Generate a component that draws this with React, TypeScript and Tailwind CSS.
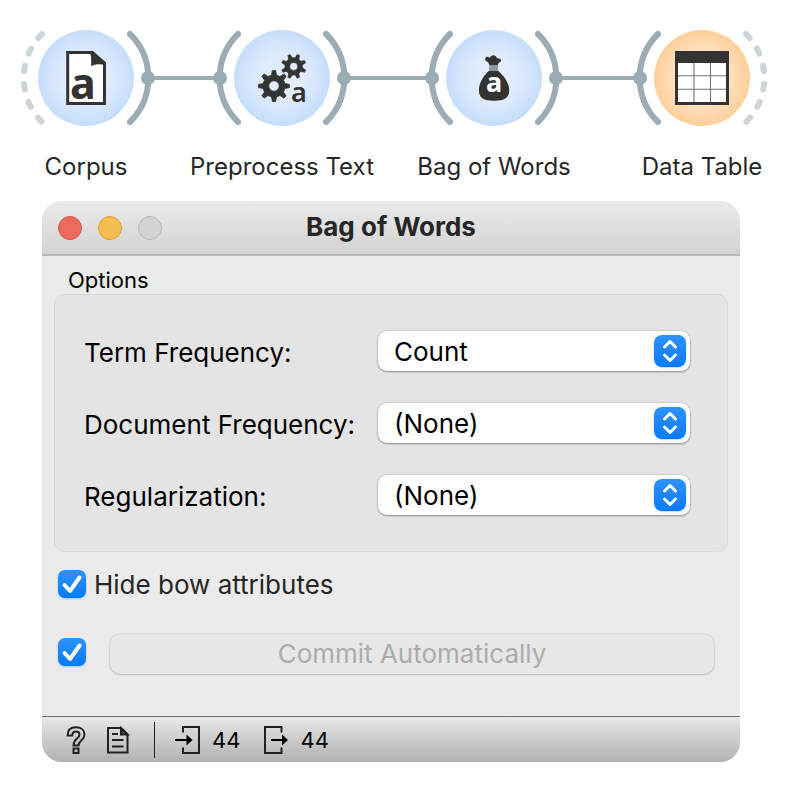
import React from "react";

const ARC = "#9cacb4";
const ARC_IDLE = "#cdd5d9";
const INK = "#333333";

type WidgetNode = {
  label: string;
  cx: number;
  fill: string;
  input: boolean;
  output: boolean;
};

const CY = 78;

const nodes: WidgetNode[] = [
  { label: "Corpus", cx: 86, fill: "url(#blue)", input: false, output: true },
  { label: "Preprocess Text", cx: 282, fill: "url(#blue)", input: true, output: true },
  { label: "Bag of Words", cx: 494, fill: "url(#blue)", input: true, output: true },
  { label: "Data Table", cx: 702, fill: "url(#orange)", input: true, output: false },
];

function Anchor({ cx, side, active }: { cx: number; side: -1 | 1; active: boolean }) {
  const x = cx + side * 44;
  const d = `M${x} ${CY - 44}A62 62 0 0 ${side === 1 ? 1 : 0} ${x} ${CY + 44}`;
  return (
    <g>
      <path
        d={d}
        fill="none"
        stroke={active ? ARC : ARC_IDLE}
        strokeWidth="6"
        strokeLinecap="round"
        strokeDasharray={active ? undefined : "5.5 12.8"}
      />
      {active && <circle cx={cx + side * 62} cy={CY} r="7" fill={ARC} />}
    </g>
  );
}

function gearPath(cx: number, cy: number, outer: number, root: number, hole: number, turn: number) {
  const teeth = 8;
  const step = (Math.PI * 2) / teeth;
  const at = (r: number, a: number) =>
    `${(cx + r * Math.sin(a)).toFixed(2)} ${(cy - r * Math.cos(a)).toFixed(2)}`;
  const points: string[] = [];
  for (let i = 0; i < teeth; i++) {
    const a = turn + i * step;
    points.push(at(root, a - step * 0.29), at(outer, a - step * 0.13), at(outer, a + step * 0.13), at(root, a + step * 0.29));
  }
  return (
    `M${points.join("L")}Z` +
    `M${cx - hole} ${cy}a${hole} ${hole} 0 1 0 ${hole * 2} 0a${hole} ${hole} 0 1 0 ${-hole * 2} 0Z`
  );
}

function Workflow() {
  return (
    <section aria-label="Workflow" className="relative mx-auto h-[201px] w-[788px]">
      <svg width="788" height="140" viewBox="0 0 788 140" className="block" aria-hidden="true">
        <defs>
          <radialGradient id="blue">
            <stop offset="0" stopColor="#e6effc" />
            <stop offset="0.5" stopColor="#dfebfc" />
            <stop offset="1" stopColor="#c6defc" />
          </radialGradient>
          <radialGradient id="orange">
            <stop offset="0" stopColor="#fff0de" />
            <stop offset="0.5" stopColor="#ffe3c4" />
            <stop offset="1" stopColor="#ffcf9b" />
          </radialGradient>
        </defs>
        <path d="M148 78H220M344 78H432M556 78H640" stroke={ARC} strokeWidth="4" />
        {nodes.map((n) => (
          <g key={n.label}>
            <circle cx={n.cx} cy={CY} r="48" fill={n.fill} />
            <Anchor cx={n.cx} side={-1} active={n.input} />
            <Anchor cx={n.cx} side={1} active={n.output} />
          </g>
        ))}

        {/* Corpus: page with folded corner */}
        <path d="M67.7 52.5H92L104.5 63.8V103.5H67.7Z" fill="#fff" stroke={INK} strokeWidth="3" />
        <path d="M89 51H93L106 62.5V65.5C101 63.7 96 63.8 91 66C91.5 60 91.5 55 89 51Z" fill={INK} />
        <text x="70" y="99" fontSize="43" className="font-['Noto_Sans',sans-serif] font-bold" fill={INK}>
          a
        </text>

        {/* Preprocess Text: two gears */}
        <path d={gearPath(274, 86, 15.6, 11.2, 5.2, 0)} fill={INK} fillRule="evenodd" stroke={INK} strokeWidth="0.8" strokeLinejoin="round" />
        <path d={gearPath(293.7, 66.4, 12.4, 8.8, 4, Math.PI / 8)} fill={INK} fillRule="evenodd" stroke={INK} strokeWidth="0.6" strokeLinejoin="round" />
        <text x="291" y="102" fontSize="27" className="font-['Noto_Sans',sans-serif] font-semibold" fill={INK}>
          a
        </text>

        {/* Bag of Words: tied sack */}
        <path
          d="M489.3 65.5C489 62.5 487.5 61.5 485.8 61C484.5 59.5 485.2 57 487 56.8C488.5 56.6 489.3 57.3 490 58C490.3 56 492 55.2 493.4 55.2C495 55.2 496.3 56 496.8 58C497.5 57.8 499 58.8 500.2 58.8C501.5 59.5 501.2 61.6 499.8 62.2C498.5 62.8 497.8 64 497.7 65.5Z"
          fill={INK}
        />
        <path d="M489 67H498M489 69H498" stroke={INK} strokeWidth="0.9" />
        <path
          d="M489.3 70.5H497.7C502 74 509.2 82 509.2 90C509.2 98 504.5 100.700 494 100.700C483.5 100.700 478.9 98 478.9 90C478.9 82 485 74 489.3 70.5Z"
          fill={INK}
        />
        <text x="486" y="92" fontSize="27" className="font-['Noto_Sans',sans-serif] font-bold" fill="#fff">
          a
        </text>

        {/* Data Table: grid */}
        <rect x="675" y="51" width="54" height="54" fill={INK} />
        <rect x="678" y="63" width="48" height="39" fill="#fff" />
        <path d="M694 63V102M710.5 63V102M678 75.7H726M678 89.2H726" stroke="#77736f" strokeWidth="1.1" />
      </svg>
      {nodes.map((n) => (
        <span
          key={n.label}
          className="absolute top-[151px] -translate-x-1/2 whitespace-nowrap text-[24px] leading-8 text-[#262626]"
          style={{ left: n.cx }}
        >
          {n.label}
        </span>
      ))}
    </section>
  );
}

function SelectRow({ id, label, options }: { id: string; label: string; options: string[] }) {
  return (
    <>
      <label htmlFor={id} className="whitespace-nowrap pt-1 text-[26px] leading-9">
        {label}
      </label>
      <div className="relative">
        <select
          id={id}
          defaultValue={options[0]}
          className="h-10 w-full appearance-none rounded-[9px] bg-white pl-4 pr-12 pt-0.5 text-[26px] leading-9 text-black shadow-[0_0_1px_1px_rgba(0,0,0,0.08),0_1px_2px_rgba(0,0,0,0.35)] outline-none"
        >
          {options.map((o) => (
            <option key={o}>{o}</option>
          ))}
        </select>
        <span className="pointer-events-none absolute right-1 top-1 h-8 w-8 rounded-lg bg-linear-to-b from-[#2e93ff] to-[#007aff] shadow-[0_1px_2px_rgba(0,122,255,0.3)]">
          <svg viewBox="0 0 32 32" className="size-8" fill="none" stroke="#fff" strokeWidth="3" strokeLinecap="round" strokeLinejoin="round" aria-hidden="true">
            <path d="M10.5 12L16 6.5L21.5 12M10.5 20L16 25.5L21.5 20" />
          </svg>
        </span>
      </div>
    </>
  );
}

function Check({ id, label }: { id: string; label?: string }) {
  return (
    <span className="relative block size-7 shrink-0">
      <input
        id={id}
        type="checkbox"
        defaultChecked
        aria-label={label}
        className="peer block size-7 appearance-none rounded-[7px] bg-white shadow-[0_1px_2px_rgba(0,122,255,0.35)] checked:bg-linear-to-b checked:from-[#2e93ff] checked:to-[#007aff]"
      />
      <svg viewBox="0 0 28 28" className="pointer-events-none absolute inset-0 hidden size-7 peer-checked:block" fill="none" stroke="#fff" strokeWidth="4" strokeLinecap="round" strokeLinejoin="round" aria-hidden="true">
        <path d="M6.5 15L12 21L21.5 7.5" />
      </svg>
    </span>
  );
}

function StatusBar() {
  return (
    <footer className="flex h-[46px] items-center border-t border-[#6e6e6e] bg-linear-to-b from-[#e8e8e8] to-[#b1b1b1] pl-6 text-[22px] leading-7 text-black">
      <button type="button" aria-label="Help" className="h-7 w-5">
        <svg viewBox="0 0 20 28" className="h-7 w-5" fill="none" stroke="#231f20" strokeWidth="2" aria-hidden="true">
          <path d="M1.5 9.5C1.5 4 5 1.2 10 1.2C15 1.2 18.5 4 18.5 8.5C18.5 14.5 12.5 14.5 12.5 19.5H7.5C7.5 12.5 13.5 12.5 13.5 8.8C13.5 6.6 12 5.5 10 5.5C7.8 5.5 6.3 7 6.3 9.5Z" />
          <path d="M7.5 22.5H12.5V27H7.5Z" />
        </svg>
      </button>
      <button type="button" aria-label="Report" className="ml-5 h-7 w-6">
        <svg viewBox="0 0 24 28" className="h-7 w-6" fill="none" stroke="#231f20" strokeWidth="2" aria-hidden="true">
          <path d="M2 2H15L21.5 8.5V26.5H2Z" />
          <path d="M15 2V8.500H21.500Z" fill="#4a4647" />
          <path d="M6 8H12M6 14H17.500M6 20.500H17.500" />
        </svg>
      </button>
      <span className="ml-6 h-9 w-px bg-[#231f20]" />
      <button type="button" aria-label="Input: 44" className="ml-5 flex items-center gap-3">
        <svg viewBox="0 0 25 28" className="h-7 w-[25px]" fill="none" stroke="#231f20" strokeWidth="2" aria-hidden="true">
          <path d="M8 6.5V1H24V27H8V21.5" />
          <path d="M0 14H13" stroke="#000" />
          <path d="M11.500 8.500L17.500 14L11.500 19.500Z" fill="#000" stroke="none" />
        </svg>
        44
      </button>
      <button type="button" aria-label="Output: 44" className="ml-6 flex items-center gap-3">
        <svg viewBox="0 0 24 28" className="h-7 w-6" fill="none" stroke="#231f20" strokeWidth="2" aria-hidden="true">
          <path d="M17.5 6.5V1H1V27H17.5V21.5" />
          <path d="M7 14H19" stroke="#000" />
          <path d="M18 8.5L24 14L18 19.5Z" fill="#000" stroke="none" />
        </svg>
        44
      </button>
    </footer>
  );
}

export default function App() {
  return (
    <main className="min-h-screen bg-white font-['Inter',sans-serif]">
      <Workflow />
      <section aria-label="Bag of Words" className="ml-[42px] mr-12 overflow-hidden rounded-[20px] bg-[#ebebeb]">
        <header className="relative flex h-[55px] items-center justify-center border-b-2 border-[#b8b8b8] bg-linear-to-b from-[#ebebeb] to-[#d3d3d3]">
          <div className="absolute left-4 flex gap-4">
            <button type="button" aria-label="Close" className="size-6 rounded-full border border-[#d5554c] bg-[#ed6a5f]" />
            <button type="button" aria-label="Minimize" className="size-6 rounded-full border border-[#d9a03a] bg-[#f5bf4f]" />
            <button type="button" aria-label="Zoom" disabled className="size-6 rounded-full border border-[#b8b8b8] bg-[#d3d3d3]" />
          </div>
          <h1 className="pb-0.5 text-[26px] font-bold leading-8 text-[#262626]">Bag of Words</h1>
        </header>

        <fieldset className="mx-3">
          <legend className="pb-0.5 pl-3.5 pt-3 text-[22px] leading-6 text-black">Options</legend>
          <div className="grid grid-cols-[294px_minmax(0,1fr)] gap-y-8 rounded-[10px] border border-[#d9d9d9] bg-[#e4e4e4] py-9 pl-[29px] pr-[37px] text-black">
            <SelectRow id="tf" label="Term Frequency:" options={["Count", "Binary", "Sublinear"]} />
            <SelectRow id="df" label="Document Frequency:" options={["(None)", "IDF", "Smooth IDF"]} />
            <SelectRow id="reg" label="Regularization:" options={["(None)", "L1 (Sum of elements)", "L2 (Euclidean)"]} />
          </div>
        </fieldset>

        <div className="mt-[18px] flex items-start gap-2 px-4">
          <Check id="hide" />
          <label htmlFor="hide" className="text-[26px] leading-[30px] text-[#262626]">
            Hide bow attributes
          </label>
        </div>

        <div className="mb-[42px] mt-[34px] flex items-start gap-6 pl-4 pr-[26px]">
          <div className="pt-1">
            <Check id="auto" label="Commit automatically" />
          </div>
          <button
            type="button"
            disabled
            className="h-10 grow rounded-[10px] bg-[#e7e7e7] text-[26px] leading-9 text-[#acacac] shadow-[0_0_1px_1px_rgba(0,0,0,0.06),0_1px_2px_rgba(0,0,0,0.15)]"
          >
            Commit Automatically
          </button>
        </div>

        <StatusBar />
      </section>
    </main>
  );
}
